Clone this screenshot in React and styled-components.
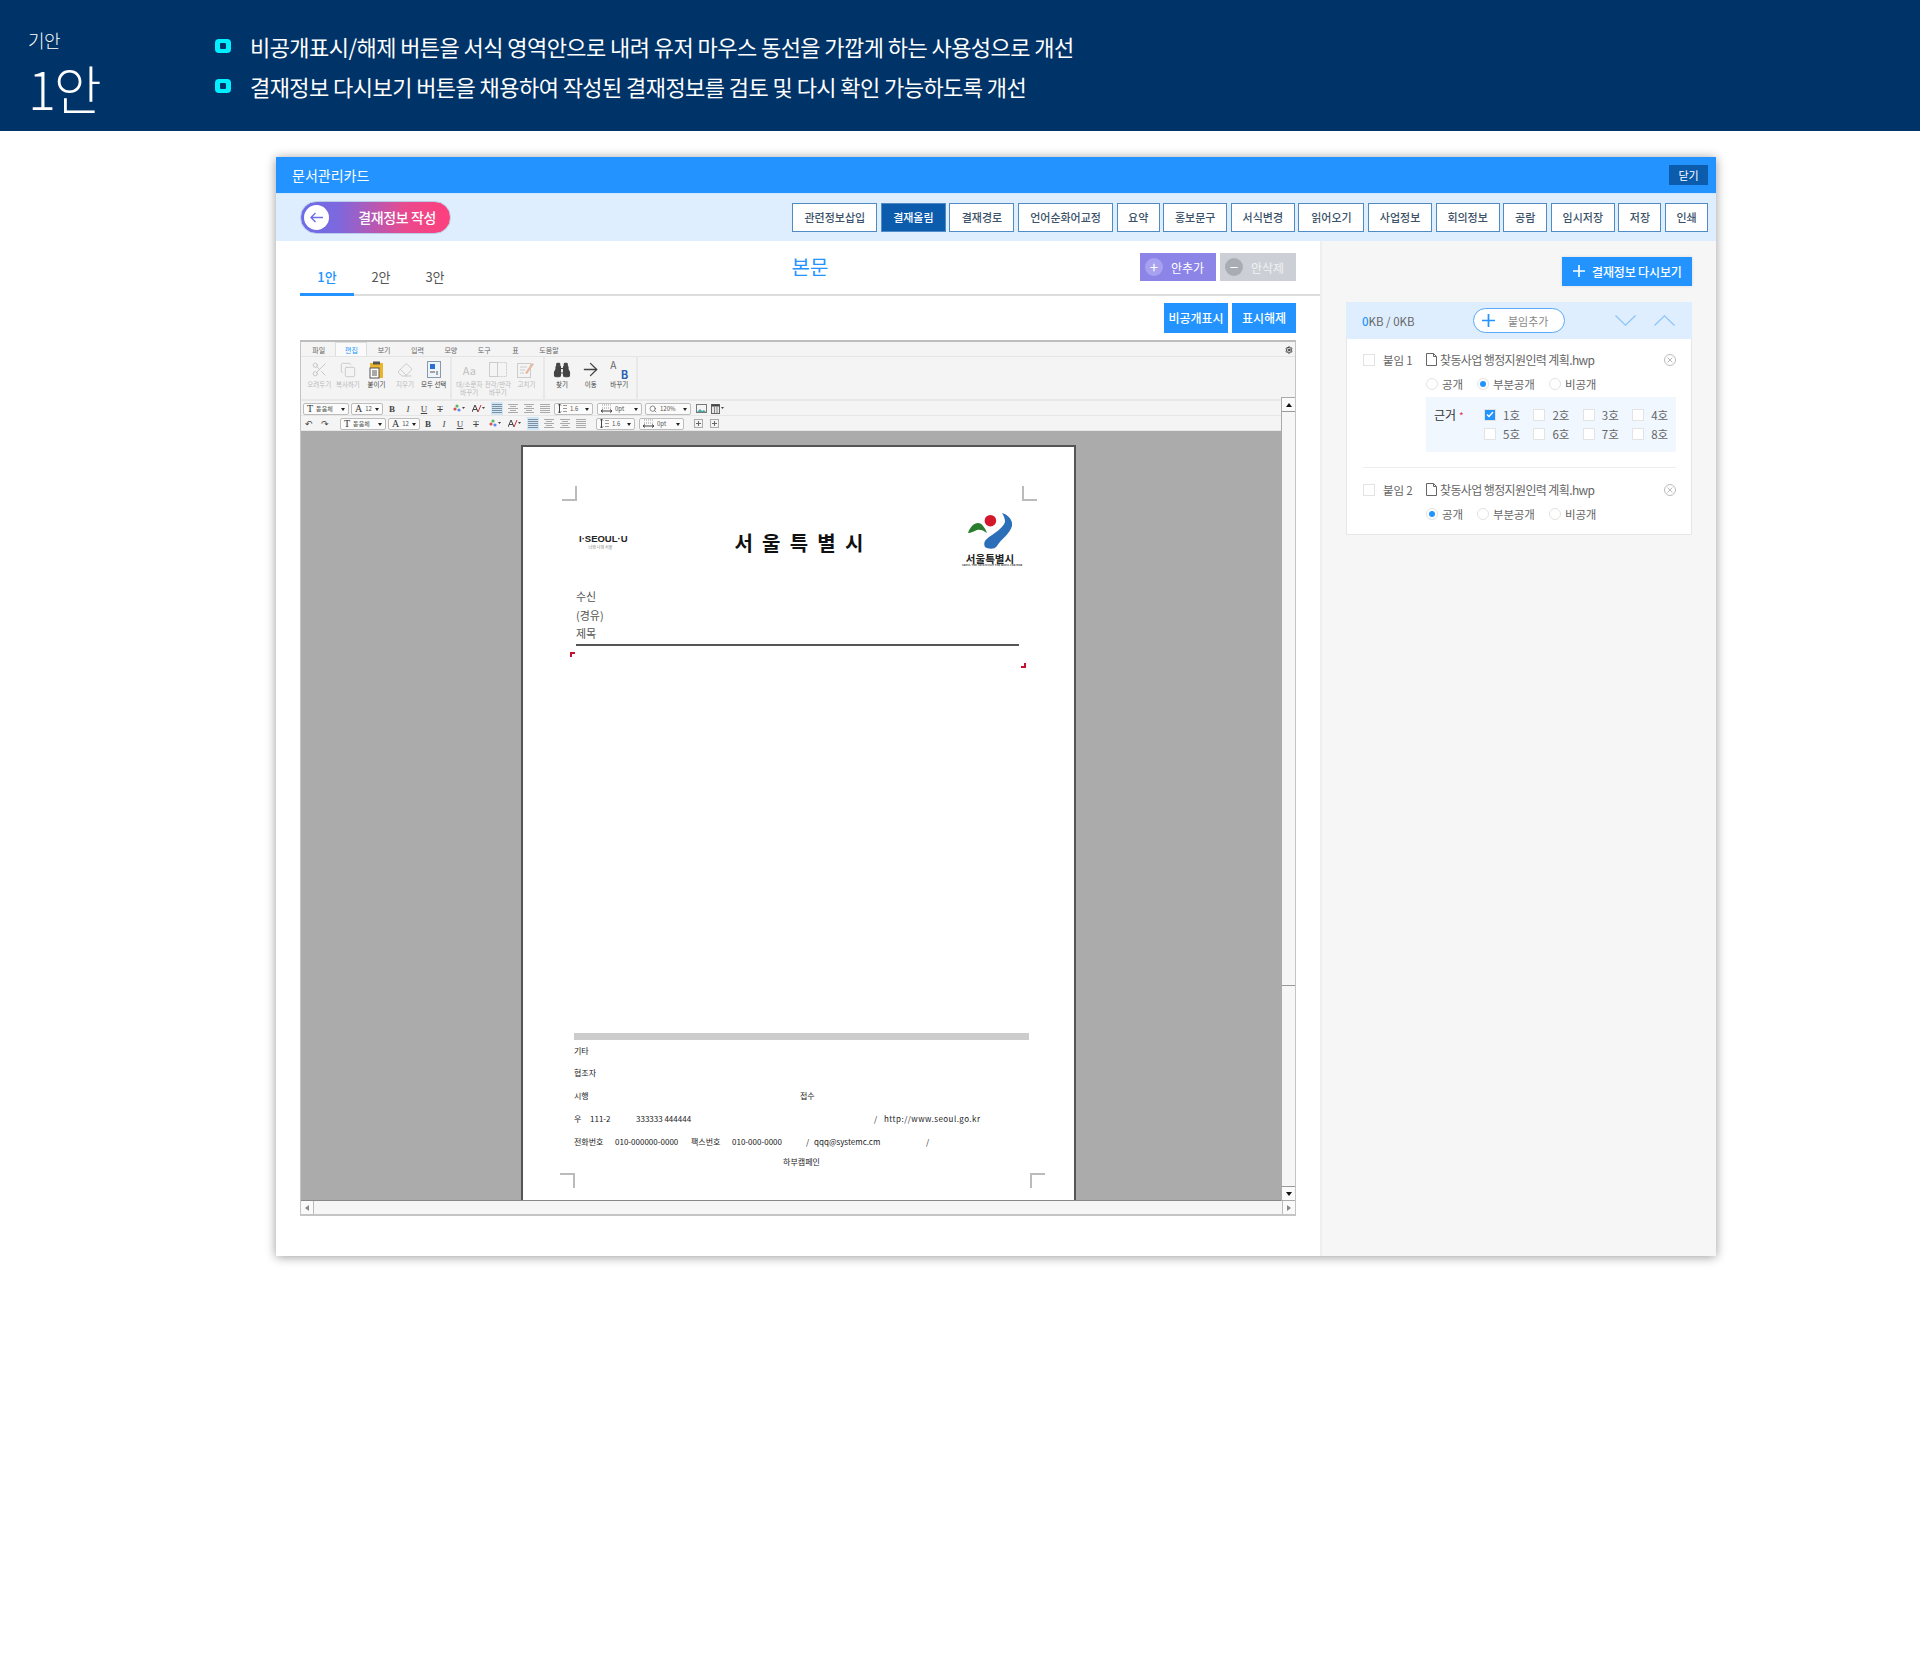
import React from "react";
import styled, { createGlobalStyle } from "styled-components";
import { ArrowRight, Binoculars, Copy, Eraser, Scissors, Search, Settings } from "lucide-react";

const GlobalStyle = createGlobalStyle`
  html, body {
    margin: 0;
    background: #fff;
    font-family: "Noto Sans CJK KR", "Noto Sans", sans-serif;
  }
  * { box-sizing: border-box; }
`;

const Page = styled.div`
  width: 1920px;
  height: 1671px;
  overflow: hidden;
`;

/* top banner */
const Banner = styled.header`
  height: 131px;
  background: #003468;
  color: #fff;
  display: flex;
  padding-left: 28px;
`;
const Version = styled.div`
  width: 187px;
  padding-top: 25px;
`;
const VersionLabel = styled.div`
  font-size: 18px;
  line-height: 30px;
  letter-spacing: -0.5px;
  font-weight: 300;
`;
const VersionName = styled.div`
  font-size: 52px;
  line-height: 60px;
  margin-top: 3px;
  letter-spacing: -2px;
  font-weight: 300;
`;
const Notes = styled.ul`
  list-style: none;
  margin: 0;
  padding: 26px 0 0;
`;
const Note = styled.li`
  display: flex;
  align-items: center;
  gap: 19px;
  height: 40px;
  font-size: 22px;
  letter-spacing: -0.56px;
`;
const Bullet = styled.span`
  width: 16px;
  height: 14px;
  border-radius: 4px;
  background: #00f0ff;
  display: flex;
  align-items: center;
  justify-content: center;
  &::after {
    content: "";
    width: 6px;
    height: 6px;
    background: #003468;
    border-radius: 1px;
  }
`;

/* card */
const Card = styled.section`
  width: 1440px;
  height: 1099px;
  margin: 26px 0 0 276px;
  box-shadow: 0 1px 10px rgba(0, 0, 0, 0.4);
  background: #fff;
  display: flex;
  flex-direction: column;
`;
const CardTitleBar = styled.div`
  height: 36px;
  flex: none;
  background: #2394ff;
  display: flex;
  align-items: center;
  justify-content: space-between;
  padding: 0 8px 0 16px;
  color: #fff;
  font-size: 14px;
`;
const CloseButton = styled.button`
  width: 39px;
  height: 20px;
  border: 0;
  padding: 0;
  background: #0b5cad;
  color: #fff;
  font: inherit;
  font-size: 11px;
`;
const ToolBar = styled.div`
  height: 48px;
  flex: none;
  background: #deeeff;
  border-top: 1px solid #cfe6ff;
  display: flex;
  align-items: center;
  padding: 0 8px 0 24px;
`;
const ComposeButton = styled.button`
  width: 151px;
  height: 33px;
  border-radius: 17px;
  border: 1px solid #b9cdea;
  padding: 0 14px 2px 3px;
  background: linear-gradient(90deg, #6d6ce9 0%, #7d68dd 25%, #e94a8e 70%, #ff3f7c 100%);
  color: #fff;
  font: inherit;
  font-size: 14px;
  font-weight: 500;
  letter-spacing: -0.4px;
  display: flex;
  align-items: center;
  justify-content: space-between;
`;
const ArrowDisc = styled.span`
  width: 25px;
  height: 25px;
  margin-top: 2px;
  border-radius: 50%;
  background: #fff;
  color: #6d6ce9;
  display: flex;
  align-items: center;
  justify-content: center;
`;
const ToolButtons = styled.div`
  margin-left: auto;
  display: flex;
  gap: 3.6px;
`;
const ToolButton = styled.button`
  width: ${(p) => p.$w}px;
  height: 29px;
  padding: 0 0 2px;
  border: 1px solid #4f8cc6;
  background: ${(p) => (p.$active ? "#0b5cad" : "#fff")};
  color: ${(p) => (p.$active ? "#fff" : "#3c5269")};
  font: inherit;
  font-size: 11px;
  font-weight: 500;
`;
const CardBody = styled.div`
  flex: 1;
  display: grid;
  grid-template-columns: 1044px 396px;
  min-height: 0;
`;

/* left pane */
const MainPane = styled.div`
  padding-left: 24px;
`;
const TabBar = styled.div`
  height: 55px;
  display: grid;
  grid-template-columns: 1fr auto 1fr;
  border-bottom: 2px solid #ddd;
  padding: 0 24px 0 0;
`;
const Tabs = styled.div`
  display: flex;
  align-items: flex-end;
`;
const Tab = styled.div`
  width: 54px;
  height: 38px;
  margin-bottom: -2px;
  padding-top: 3px;
  font-size: 13px;
  line-height: 31px;
  text-align: center;
  font-weight: ${(p) => (p.$active ? 500 : 400)};
  color: ${(p) => (p.$active ? "#2394ff" : "#555")};
  border-bottom: 3px solid ${(p) => (p.$active ? "#2394ff" : "transparent")};
`;
const DocTitle = styled.h2`
  margin: 9px -24px 0 0;
  font-size: 20px;
  line-height: 34px;
  font-weight: 400;
  color: #2394ff;
`;
const VersionActions = styled.div`
  display: flex;
  justify-content: flex-end;
  gap: 4px;
  padding-top: 12px;
`;
const VersionButton = styled.button`
  width: 76px;
  height: 28px;
  padding: 0 0 0 5px;
  border: 0;
  background: ${(p) => (p.$muted ? "#ccd0d6" : "#8d84e8")};
  color: ${(p) => (p.$muted ? "#f0f1f3" : "#fff")};
  font: inherit;
  font-size: 12px;
  display: flex;
  align-items: center;
  gap: 8px;
`;
const VersionDisc = styled.span`
  width: 18px;
  height: 18px;
  border-radius: 50%;
  background: ${(p) => (p.$muted ? "#a9adb3" : "#a8a1f0")};
  color: #fff;
  font-size: 15px;
  line-height: 17px;
  text-align: center;
`;
const MaskActions = styled.div`
  display: flex;
  justify-content: flex-end;
  gap: 4px;
  padding: 7px 24px 7px 0;
`;
const MaskButton = styled.button`
  width: ${(p) => p.$w}px;
  height: 30px;
  padding: 0 0 2px;
  border: 0;
  background: #2394ff;
  color: #fff;
  font: inherit;
  font-size: 12px;
  font-weight: 500;
`;

/* word processor */
const Editor = styled.div`
  position: relative;
  width: 996px;
  height: 876px;
  border: 1px solid #c4c4c4;
  border-top: 2px solid #bdbdbd;
  border-bottom-width: 2px;
  background: #f4f4f4;
  display: flex;
  flex-direction: column;
  color: #555;
`;
const MenuTabs = styled.div`
  height: 15px;
  flex: none;
  display: flex;
  align-items: flex-end;
  padding: 0 2px 0 1px;
  border-bottom: 1px solid #e4e4e4;
`;
const MenuTab = styled.div`
  width: ${(p) => p.$w || 33.4}px;
  height: 14px;
  font-size: 7px;
  line-height: 15px;
  text-align: center;
  color: ${(p) => (p.$active ? "#2394ff" : "#666")};
  background: ${(p) => (p.$active ? "#fafafa" : "transparent")};
  border: 1px solid ${(p) => (p.$active ? "#ddd" : "transparent")};
  border-bottom: 0;
`;
const MenuGear = styled.span`
  margin: 0 0 2px auto;
  display: flex;
  color: #333;
`;
const Ribbon = styled.div`
  height: 44px;
  flex: none;
  display: flex;
  padding-left: 4px;
  border-bottom: 2px solid #e8e8e8;
`;
const RibbonGroup = styled.div`
  display: flex;
  padding-right: 2px;
  margin-right: 3px;
  border-right: 2px solid #e8e8e8;
`;
const RibbonItem = styled.div`
  width: 28.6px;
  display: flex;
  flex-direction: column;
  align-items: center;
  padding-top: 2px;
  font-size: 6.5px;
  line-height: 8px;
  white-space: nowrap;
  text-align: center;
  color: ${(p) => (p.$off ? "#b9b9b9" : "#444")};
`;
const RibbonGlyph = styled.div`
  height: 21px;
  display: flex;
  align-items: center;
  justify-content: center;
  color: ${(p) => (p.$off ? "#c0c0c0" : "#444")};
  font-size: 11px;
`;
const ReplaceGlyph = styled.span`
  display: flex;
  width: 18px;
  height: 19px;
  justify-content: space-between;
  font-size: 10px;
  line-height: 10px;
  color: #666;
  b {
    align-self: flex-end;
    color: #2b63b5;
    font-size: 11px;
  }
`;
const FormatRow = styled.div`
  height: 15px;
  flex: none;
  display: flex;
  align-items: center;
  padding-top: 1px;
  padding-left: ${(p) => p.$pad}px;
  border-bottom: 1px solid #e6e6e6;
`;
const FormatSelect = styled.div`
  width: ${(p) => p.$w}px;
  height: 12px;
  margin-left: ${(p) => p.$ml || 0}px;
  flex: none;
  border: 1px solid #bdbdbd;
  border-radius: 2px;
  background: #fbfbfb;
  font-size: 6px;
  line-height: 10px;
  padding-left: 3px;
  color: #555;
  position: relative;
  white-space: nowrap;
  display: flex;
  align-items: center;
  gap: 3px;
  &::after {
    content: "";
    position: absolute;
    right: 3px;
    top: 4px;
    border: 2px solid transparent;
    border-top: 3px solid #222;
  }
`;
const SelectGlyph = styled.span`
  font-family: "Liberation Serif", serif;
  font-size: 10px;
  line-height: 10px;
  color: #333;
`;
const FormatKey = styled.span`
  width: 16px;
  margin-left: ${(p) => p.$ml || 0}px;
  flex: none;
  text-align: center;
  font-family: "Liberation Serif", serif;
  font-size: 9px;
  line-height: 12px;
  font-weight: ${(p) => (p.$bold ? 700 : 400)};
  font-style: ${(p) => (p.$italic ? "italic" : "normal")};
  text-decoration: ${(p) => (p.$under ? "underline" : p.$strike ? "line-through" : "none")};
  color: #444;
`;
const FormatIcon = styled.span`
  width: 16px;
  height: 13px;
  margin-left: ${(p) => p.$ml || 0}px;
  flex: none;
  display: flex;
  align-items: center;
  justify-content: center;
  background: ${(p) => (p.$active ? "linear-gradient(90deg, transparent 2px, #cfe6f7 2px, #cfe6f7 14px, transparent 14px)" : "none")};
`;
const Workspace = styled.div`
  flex: 1;
  min-height: 0;
  margin-right: 14px;
  background: #ababab;
  border-bottom: 1px solid #888;
  overflow: hidden;
  padding: 14px 0 0 220px;
`;
const Paper = styled.div`
  position: relative;
  width: 555px;
  height: 755px;
  background: #fff;
  border: 2px solid #555;
  border-bottom: 0;
  padding: 66px 56px 0 53px;
  color: #333;
`;
const CropMark = styled.i`
  position: absolute;
  width: 15px;
  height: 15px;
  border: 0 solid #bbb;
  ${(p) => p.$top && "top: 39px; border-bottom-width: 2px;"}
  ${(p) => !p.$top && "bottom: 12px; border-top-width: 2px;"}
  ${(p) => p.$left && `left: ${p.$top ? 39 : 37}px; border-right-width: 2px;`}
  ${(p) => !p.$left && `right: ${p.$top ? 37 : 29}px; border-left-width: 2px;`}
`;
const BodyMark = styled.i`
  position: absolute;
  width: 5px;
  height: 5px;
  border: 0 solid #c41230;
  ${(p) => (p.$start
    ? "left: 47px; top: 205px; border-top-width: 2px; border-left-width: 2px;"
    : "right: 48px; top: 216px; border-bottom-width: 2px; border-right-width: 2px;")}
`;
const Letterhead = styled.div`
  height: 57px;
  display: grid;
  grid-template-columns: 60px 1fr 56px;
  align-items: start;
`;
const Slogan = styled.div`
  padding: 20px 0 0 3px;
  text-align: center;
  font-family: "Liberation Sans", sans-serif;
  font-weight: 700;
  font-size: 9.5px;
  line-height: 12px;
  color: #222;
  white-space: nowrap;
  width: 46px;
  small {
    display: block;
    font-family: "Noto Sans CJK KR", sans-serif;
    font-size: 4px;
    line-height: 5px;
    font-weight: 400;
    color: #777;
  }
`;
const CityName = styled.div`
  padding: 15px 0 0 9px;
  text-align: center;
  font-size: 20px;
  line-height: 30px;
  font-weight: 700;
  letter-spacing: 9.2px;
  color: #111;
`;
const CityMark = styled.div`
  text-align: center;
  font-size: 10.5px;
  line-height: 11px;
  font-weight: 700;
  color: #222;
  white-space: nowrap;
  svg { display: block; margin: 0 auto 4px; }
  small {
    display: block;
    font-size: 2.5px;
    line-height: 3px;
    letter-spacing: 0.1px;
  }
`;
const Receiver = styled.div`
  margin-top: 17px;
  font-size: 11px;
  line-height: 18.5px;
  color: #555;
  width: 443px;
  border-bottom: 2px solid #555;
  padding-bottom: 1px;
`;
const FootBlock = styled.div`
  margin: 387px -11px 0 -2px;
  border-top: 7px solid #ccc;
  padding-top: 1px;
  font-size: 8px;
  color: #222;
`;
const FootRow = styled.div`
  height: ${(p) => p.$h || 23}px;
  display: flex;
  align-items: center;
  white-space: nowrap;
  justify-content: ${(p) => (p.$center ? "center" : "flex-start")};
`;
const FootCell = styled.span`
  flex: none;
  width: ${(p) => p.$w}px;
`;
const FootLink = styled.span`
  letter-spacing: 0.45px;
`;

const VerticalScroll = styled.div`
  position: absolute;
  right: 0;
  top: 55px;
  bottom: 13px;
  width: 14px;
  background: #f6f6f6;
  border: 1px solid #aaa;
  border-right: 0;
  display: flex;
  flex-direction: column;
  justify-content: space-between;
`;
const ScrollStep = styled.div`
  height: 14px;
  background: #fafafa;
  border-bottom: 1px solid #999;
  display: flex;
  align-items: center;
  justify-content: center;
  &::after {
    content: "";
    border: 3px solid transparent;
    border-bottom: 4px solid #111;
    border-top: 0;
  }
`;
const ScrollStepDown = styled(ScrollStep)`
  border-bottom: 0;
  border-top: 1px solid #999;
  &::after {
    border-bottom: 0;
    border-top: 4px solid #111;
  }
`;
const ScrollThumbEnd = styled.div`
  position: absolute;
  left: 0;
  right: 0;
  top: 587px;
  border-top: 1px solid #999;
`;
const HorizontalScroll = styled.div`
  height: 13px;
  flex: none;
  display: flex;
  justify-content: space-between;
  background: #f6f6f6;
`;
const HorizontalStep = styled.div`
  width: 13px;
  background: #fafafa;
  border: 1px solid #bbb;
  border-width: 0 ${(p) => (p.$right ? 0 : 1)}px 0 ${(p) => (p.$right ? 1 : 0)}px;
  display: flex;
  align-items: center;
  justify-content: center;
  &::after {
    content: "";
    border: 3px solid transparent;
    ${(p) => (p.$right ? "border-left: 4px solid #888; border-right: 0;" : "border-right: 4px solid #888; border-left: 0;")}
  }
`;

/* right pane */
const SidePane = styled.aside`
  background: #f6f6f6;
  border-left: 2px solid #eee;
  padding: 16px 24px 0 24px;
`;
const ReviewButton = styled.button`
  display: flex;
  align-items: center;
  gap: 7px;
  margin-left: auto;
  width: 130px;
  height: 29px;
  padding: 0 0 1px 11px;
  border: 0;
  background: #2394ff;
  color: #fff;
  font: inherit;
  font-size: 12px;
  font-weight: 500;
  letter-spacing: -0.15px;
  box-shadow: 0 0 3px rgba(0, 0, 0, 0.12);
`;
const AttachPanel = styled.div`
  margin-top: 16px;
  width: 346px;
  height: 233px;
  background: #fff;
  border: 1px solid #e6e6e6;
  border-top: 0;
`;
const AttachHead = styled.div`
  height: 37px;
  margin: 0 -1px;
  background: #deeeff;
  display: flex;
  align-items: center;
  padding: 0 17px 0 16px;
  font-size: 11.5px;
  color: #666;
  b { color: #2394ff; font-weight: 500; }
`;
const AttachSize = styled.div`
  width: 111px;
`;
const AddPill = styled.div`
  width: 92px;
  height: 25px;
  border: 1px solid #5aaaf5;
  border-radius: 13px;
  background: #fff;
  display: flex;
  align-items: center;
  gap: 13px;
  padding-left: 8px;
  font-size: 11px;
  color: #888;
`;
const Chevrons = styled.div`
  margin-left: auto;
  display: flex;
  gap: 18px;
`;
const AttachItem = styled.div`
  margin: 0 15px 0 16px;
  padding-top: ${(p) => p.$pt}px;
  padding-bottom: ${(p) => p.$pb}px;
  border-bottom: ${(p) => (p.$last ? "0" : "1px solid #eee")};
  display: grid;
  grid-template-columns: 63px minmax(0, 1fr);
  font-size: 12px;
  color: #666;
`;
const AttachLabel = styled.label`
  display: flex;
  align-items: center;
  gap: 8px;
  height: 20px;
  font-size: 11.5px;
  letter-spacing: -0.2px;
`;
const BoxMark = styled.span`
  width: 12px;
  height: 12px;
  flex: none;
  border: 1px solid #e3e3e3;
  background: ${(p) => (p.$on ? "#2394ff" : "#fff")};
  display: flex;
  align-items: center;
  justify-content: center;
`;
const FileLine = styled.div`
  height: 20px;
  display: flex;
  align-items: center;
  gap: 3px;
  padding-bottom: 1px;
  font-size: 12px;
  letter-spacing: -0.62px;
  white-space: nowrap;
`;
const RemoveIcon = styled.span`
  margin-left: auto;
  display: flex;
`;
const RadioRow = styled.div`
  height: 24px;
  margin-top: 2px;
  display: flex;
  align-items: center;
  font-size: 11.5px;
  letter-spacing: -0.2px;
`;
const RadioItem = styled.label`
  width: ${(p) => p.$w}px;
  display: flex;
  align-items: center;
  gap: 4px;
`;
const RadioDot = styled.span`
  width: 12px;
  height: 12px;
  border-radius: 50%;
  border: 1px solid #e3e3e3;
  background: #fff;
  display: flex;
  align-items: center;
  justify-content: center;
  &::after {
    content: "";
    width: 6px;
    height: 6px;
    border-radius: 50%;
    background: ${(p) => (p.$on ? "#2394ff" : "transparent")};
  }
`;
const BasisBox = styled.div`
  height: 55px;
  margin-top: 1px;
  background: #f0f7ff;
  display: grid;
  grid-template-columns: 50px minmax(0, 1fr);
  padding: 8px 0 0 8px;
`;
const BasisLabel = styled.div`
  font-size: 12px;
  line-height: 20px;
  color: #333;
  i { color: #e8344e; font-style: normal; margin-left: 3px; font-size: 10px; }
`;
const BasisGrid = styled.div`
  display: grid;
  grid-template-columns: repeat(3, 49.4px) 1fr;
  grid-auto-rows: 19px;
`;
const BasisItem = styled.label`
  display: flex;
  align-items: center;
  gap: 7px;
  font-size: 11.5px;
  white-space: nowrap;
`;

const ribbonGroups = [
  [
    { label: "오려두기", off: true, icon: <Scissors size={17} strokeWidth={1.2} /> },
    { label: "복사하기", off: true, icon: <Copy size={16} strokeWidth={1.2} /> },
    {
      label: "붙이기",
      icon: (
        <svg width="15" height="18" viewBox="0 0 15 18">
          <rect x="1" y="2" width="13" height="15" fill="#e9b52c" />
          <rect x="4" y="0.5" width="7" height="3" fill="#555" />
          <rect x="1" y="7" width="9" height="10" fill="#fff" stroke="#555" />
          <path d="M3 10h5M3 12h5M3 14h5" stroke="#555" />
        </svg>
      ),
    },
    { label: "지우기", off: true, icon: <Eraser size={16} strokeWidth={1.2} /> },
    {
      label: "모두 선택",
      icon: (
        <svg width="14" height="17" viewBox="0 0 14 17">
          <rect x="0.5" y="0.5" width="13" height="16" fill="#eef4fb" stroke="#89a" />
          <rect x="3" y="3" width="5" height="5" fill="#2a6fd6" />
          <path d="M10 10v4M3 11h5" stroke="#555" />
        </svg>
      ),
    },
  ],
  [
    { label: "대/소문자", sub: "바꾸기", off: true, icon: "Aa" },
    {
      label: "전각/반각",
      sub: "바꾸기",
      off: true,
      icon: (
        <svg width="18" height="15" viewBox="0 0 18 15">
          <rect x="0.5" y="0.5" width="8" height="14" fill="none" stroke="#ccc" />
          <rect x="8.5" y="0.5" width="9" height="14" fill="none" stroke="#ccc" strokeDasharray="2 1" />
        </svg>
      ),
    },
    {
      label: "고치기",
      off: true,
      icon: (
        <svg width="18" height="17" viewBox="0 0 18 17">
          <rect x="0.5" y="2.5" width="13" height="14" fill="none" stroke="#ccc" />
          <path d="M3 6h7M3 9h5M3 12h4" stroke="#ccc" />
          <path d="M8 12l7-10 2 1-7 10z" fill="#e7b9a0" />
        </svg>
      ),
    },
  ],
  [
    { label: "찾기", icon: <Binoculars size={18} strokeWidth={1.5} fill="#444" /> },
    { label: "이동", icon: <ArrowRight size={21} strokeWidth={1.5} /> },
    {
      label: "바꾸기",
      icon: (
        <ReplaceGlyph>
          A<b>B</b>
        </ReplaceGlyph>
      ),
    },
  ],
];

const toolButtons = [
  ["관련정보삽입", 85],
  ["결재올림", 65, true],
  ["결재경로", 65],
  ["언어순화어교정", 95],
  ["요약", 43],
  ["홍보문구", 64],
  ["서식변경", 64],
  ["읽어오기", 66],
  ["사업정보", 64],
  ["회의정보", 64],
  ["공람", 44],
  ["임시저장", 64],
  ["저장", 43],
  ["인쇄", 43],
];

const AlignIcon = ({ short, active }) => (
  <svg width="10" height="9" viewBox="0 0 10 9">
    <path
      d={short ? "M0 .5h10M2 2.5h6M0 4.5h10M2 6.5h6M0 8.5h10" : "M0 .5h10M0 2.5h10M0 4.5h10M0 6.5h10M0 8.5h10"}
      stroke={active ? "#7f8f9f" : "#aaa"}
    />
  </svg>
);
const ColorIcon = () => (
  <svg width="13" height="9" viewBox="0 0 13 9">
    <circle cx="3" cy="5" r="1.6" fill="#d9534f" />
    <circle cx="5" cy="2" r="1.6" fill="#5cb85c" />
    <circle cx="7" cy="6" r="1.6" fill="#5b8def" />
    <path d="M10 3h3l-1.5 2z" fill="#444" />
  </svg>
);
const PenIcon = () => (
  <svg width="13" height="9" viewBox="0 0 13 9">
    <path d="M0 8L3 1l3 7M1 5.5h4" stroke="#444" fill="none" />
    <path d="M6 8l3-7" stroke="#c33" />
    <path d="M10 3h3l-1.5 2z" fill="#444" />
  </svg>
);
const PictureIcon = () => (
  <svg width="11" height="9" viewBox="0 0 11 9">
    <rect x="0.5" y="0.5" width="10" height="8" fill="#f4f4f4" stroke="#777" />
    <path d="M1 8l3-3 2 2 2-1 2 2z" fill="#4aa8a0" />
  </svg>
);
const TableIcon = () => (
  <svg width="13" height="10" viewBox="0 0 13 10">
    <rect x="0.5" y="0.5" width="8" height="9" fill="#e8e8e8" stroke="#666" />
    <rect x="0.5" y="0.5" width="8" height="2" fill="#444" />
    <path d="M3.5 3v6M6 3v6" stroke="#888" />
    <path d="M10 3h3l-1.5 2z" fill="#444" />
  </svg>
);
const LineHeightIcon = () => (
  <svg width="9" height="9" viewBox="0 0 9 9">
    <path d="M1.5 0v9M0 1.5L1.5 0L3 1.5M0 7.5L1.5 9L3 7.5" fill="none" stroke="#444" />
    <path d="M5 1.5h4M5 4.5h4M5 7.5h4" stroke="#999" />
  </svg>
);
const GapIcon = () => (
  <svg width="11" height="9" viewBox="0 0 11 9">
    <path d="M1 1h9M1 4h9" stroke="#999" strokeDasharray="1 1" />
    <path d="M0 7h11M2 5.5L0 7l2 1.5M9 5.5L11 7L9 8.5" fill="none" stroke="#444" />
  </svg>
);
const SmallBoxIcon = () => (
  <svg width="9" height="9" viewBox="0 0 9 9">
    <rect x="0.5" y="0.5" width="8" height="8" fill="none" stroke="#aaa" />
    <path d="M2 4.5h5M4.5 2v5" stroke="#666" />
  </svg>
);

const TextKeys = ({ ml }) => (
  <>
    <FormatKey $bold $ml={ml}>B</FormatKey>
    <FormatKey $italic>I</FormatKey>
    <FormatKey $under>U</FormatKey>
    <FormatKey $strike>T</FormatKey>
  </>
);
const Aligns = ({ ml }) => (
  <>
    <FormatIcon $active $ml={ml}>
      <AlignIcon active />
    </FormatIcon>
    <FormatIcon>
      <AlignIcon short />
    </FormatIcon>
    <FormatIcon>
      <AlignIcon short />
    </FormatIcon>
    <FormatIcon>
      <AlignIcon />
    </FormatIcon>
  </>
);

const PlusIcon = ({ size = 12, color = "#fff" }) => (
  <svg width={size} height={size} viewBox="0 0 12 12">
    <path d="M6 0v12M0 6h12" stroke={color} strokeWidth="1.6" />
  </svg>
);
const Chevron = ({ up }) => (
  <svg width="21" height="11" viewBox="0 0 21 11">
    <path d={up ? "M0.5 10.5L10.5 0.8L20.5 10.5" : "M0.5 0.5L10.5 10.2L20.5 0.5"} fill="none" stroke="#8cc4f8" strokeWidth="1.2" />
  </svg>
);
const FileIcon = () => (
  <svg width="11" height="13" viewBox="0 0 11 13">
    <path d="M0.5 0.5h7l3 3v9h-10zM7.5 0.5v3h3" fill="#fff" stroke="#666" />
  </svg>
);
const RemoveGlyph = () => (
  <svg width="12" height="12" viewBox="0 0 12 12">
    <circle cx="6" cy="6" r="5.5" fill="none" stroke="#bbb" />
    <path d="M3.5 3.5l5 5M8.5 3.5l-5 5" stroke="#bbb" />
  </svg>
);

const Radios = ({ on }) => (
  <RadioRow>
    {[
      ["공개", 51],
      ["부분공개", 72],
      ["비공개", 60],
    ].map(([label, w], i) => (
      <RadioItem key={label} $w={w}>
        <RadioDot $on={i === on} />
        {label}
      </RadioItem>
    ))}
  </RadioRow>
);

export default function App() {
  return (
    <Page>
      <GlobalStyle />
      <Banner>
        <Version>
          <VersionLabel>기안</VersionLabel>
          <VersionName>1안</VersionName>
        </Version>
        <Notes>
          <Note>
            <Bullet />
            비공개표시/해제 버튼을 서식 영역안으로 내려 유저 마우스 동선을 가깝게 하는 사용성으로 개선
          </Note>
          <Note>
            <Bullet />
            결재정보 다시보기 버튼을 채용하여 작성된 결재정보를 검토 및 다시 확인 가능하도록 개선
          </Note>
        </Notes>
      </Banner>

      <Card>
        <CardTitleBar>
          문서관리카드
          <CloseButton>닫기</CloseButton>
        </CardTitleBar>
        <ToolBar>
          <ComposeButton>
            <ArrowDisc>
              <svg width="13" height="11" viewBox="0 0 13 11">
                <path d="M13 5.5H1M5.5 1L1 5.5L5.5 10" fill="none" stroke="currentColor" strokeWidth="1.4" />
              </svg>
            </ArrowDisc>
            결재정보 작성
          </ComposeButton>
          <ToolButtons>
            {toolButtons.map(([label, w, active]) => (
              <ToolButton key={label} $w={w} $active={active}>
                {label}
              </ToolButton>
            ))}
          </ToolButtons>
        </ToolBar>

        <CardBody>
          <MainPane>
            <TabBar>
              <Tabs>
                <Tab $active>1안</Tab>
                <Tab>2안</Tab>
                <Tab>3안</Tab>
              </Tabs>
              <DocTitle>본문</DocTitle>
              <VersionActions>
                <VersionButton>
                  <VersionDisc>+</VersionDisc>안추가
                </VersionButton>
                <VersionButton $muted>
                  <VersionDisc $muted>−</VersionDisc>안삭제
                </VersionButton>
              </VersionActions>
            </TabBar>
            <MaskActions>
              <MaskButton $w={64}>비공개표시</MaskButton>
              <MaskButton $w={64}>표시해제</MaskButton>
            </MaskActions>

            <Editor>
              <MenuTabs>
                <MenuTab>파일</MenuTab>
                <MenuTab $active $w={32}>편집</MenuTab>
                <MenuTab>보기</MenuTab>
                <MenuTab>입력</MenuTab>
                <MenuTab>모양</MenuTab>
                <MenuTab>도구</MenuTab>
                <MenuTab $w={29}>표</MenuTab>
                <MenuTab $w={38}>도움말</MenuTab>
                <MenuGear>
                  <Settings size={8} strokeWidth={3} />
                </MenuGear>
              </MenuTabs>
              <Ribbon>
                {ribbonGroups.map((group, i) => (
                  <RibbonGroup key={i}>
                    {group.map((item) => (
                      <RibbonItem key={item.label} $off={item.off}>
                        <RibbonGlyph $off={item.off}>{item.icon}</RibbonGlyph>
                        {item.label}
                        {item.sub && <div>{item.sub}</div>}
                      </RibbonItem>
                    ))}
                  </RibbonGroup>
                ))}
              </Ribbon>
              <FormatRow $pad={2}>
                <FormatSelect $w={46}><SelectGlyph>T</SelectGlyph>돋움체</FormatSelect>
                <FormatSelect $w={32} $ml={2}><SelectGlyph>A</SelectGlyph>12</FormatSelect>
                <TextKeys ml={1} />
                <FormatIcon $ml={2}><ColorIcon /></FormatIcon>
                <FormatIcon $ml={4}><PenIcon /></FormatIcon>
                <Aligns ml={3} />
                <FormatSelect $w={39} $ml={1}><LineHeightIcon />1.6</FormatSelect>
                <FormatSelect $w={45} $ml={4}><GapIcon />0pt</FormatSelect>
                <FormatSelect $w={46} $ml={3}><Search size={8} strokeWidth={2} />120%</FormatSelect>
                <FormatIcon $ml={2}><PictureIcon /></FormatIcon>
                <FormatIcon><TableIcon /></FormatIcon>
              </FormatRow>
              <FormatRow $pad={0}>
                <FormatKey>↶</FormatKey>
                <FormatKey>↷</FormatKey>
                <FormatSelect $w={46} $ml={7}><SelectGlyph>T</SelectGlyph>돋움체</FormatSelect>
                <FormatSelect $w={32} $ml={2}><SelectGlyph>A</SelectGlyph>12</FormatSelect>
                <TextKeys />
                <FormatIcon $ml={2}><ColorIcon /></FormatIcon>
                <FormatIcon $ml={4}><PenIcon /></FormatIcon>
                <Aligns ml={3} />
                <FormatSelect $w={39} $ml={7}><LineHeightIcon />1.6</FormatSelect>
                <FormatSelect $w={45} $ml={4}><GapIcon />0pt</FormatSelect>
                <FormatIcon $ml={6}><SmallBoxIcon /></FormatIcon>
                <FormatIcon><SmallBoxIcon /></FormatIcon>
              </FormatRow>
              <Workspace>
                <Paper>
                  <CropMark $top $left />
                  <CropMark $top />
                  <CropMark $left />
                  <CropMark />
                  <BodyMark $start />
                  <BodyMark />
                  <Letterhead>
                    <Slogan>
                      I·SEOUL·U
                      <small>너와 나의 서울</small>
                    </Slogan>
                    <CityName>서울특별시</CityName>
                    <CityMark>
                      <svg width="44" height="36" viewBox="0 0 44 36">
                        <circle cx="22.4" cy="7.7" r="5.8" fill="#d2182a" />
                        <path d="M0 20C2 14 6 10 10 10C14 10 17 15 19 20C15 17 12 16 9 17C6 18 3 20 0 20Z" fill="#2a7d2c" />
                        <path d="M34 0C41 2 45 8 44 13C42 21 33 26 29 33C26 37 20 36 17 34C15 30 17 27 21 24C27 20 35 15 37 9C37 6 36 3 34 0Z" fill="#2a6fb8" />
                      </svg>
                      서울특별시
                      <small>SEOUL THE TRUSTFULLY THE SEOUL FOR MAN</small>
                    </CityMark>
                  </Letterhead>
                  <Receiver>
                    <div>수신</div>
                    <div>(경유)</div>
                    <div>제목</div>
                  </Receiver>
                  <FootBlock>
                    <FootRow $h={20}>기타</FootRow>
                    <FootRow>협조자</FootRow>
                    <FootRow>
                      <FootCell $w={226}>시행</FootCell>
                      접수
                    </FootRow>
                    <FootRow>
                      <FootCell $w={16}>우</FootCell>
                      <FootCell $w={46}>111-2</FootCell>
                      <FootCell $w={238}>333333 444444</FootCell>
                      <FootCell $w={10}>/</FootCell>
                      <FootLink>http://www.seoul.go.kr</FootLink>
                    </FootRow>
                    <FootRow>
                      <FootCell $w={41}>전화번호</FootCell>
                      <FootCell $w={76}>010-000000-0000</FootCell>
                      <FootCell $w={41}>팩스번호</FootCell>
                      <FootCell $w={74}>010-000-0000</FootCell>
                      <FootCell $w={8}>/</FootCell>
                      <FootCell $w={112}>qqq@systemc.cm</FootCell>
                      /
                    </FootRow>
                    <FootRow $h={17} $center>하부캠페인</FootRow>
                  </FootBlock>
                </Paper>
              </Workspace>
              <HorizontalScroll>
                <HorizontalStep />
                <HorizontalStep $right />
              </HorizontalScroll>
              <VerticalScroll>
                <ScrollStep />
                <ScrollThumbEnd />
                <ScrollStepDown />
              </VerticalScroll>
            </Editor>
          </MainPane>

          <SidePane>
            <ReviewButton>
              <PlusIcon />
              결재정보 다시보기
            </ReviewButton>
            <AttachPanel>
              <AttachHead>
                <AttachSize>
                  <b>0</b>KB / 0KB
                </AttachSize>
                <AddPill>
                  <PlusIcon size={13} color="#2394ff" />
                  붙임추가
                </AddPill>
                <Chevrons>
                  <Chevron />
                  <Chevron up />
                </Chevrons>
              </AttachHead>
              <AttachItem $pt={11} $pb={15}>
                <AttachLabel>
                  <BoxMark />
                  붙임 1
                </AttachLabel>
                <div>
                  <FileLine>
                    <FileIcon />
                    찾동사업 행정지원인력 계획.hwp
                    <RemoveIcon>
                      <RemoveGlyph />
                    </RemoveIcon>
                  </FileLine>
                  <Radios on={1} />
                  <BasisBox>
                    <BasisLabel>
                      근거<i>*</i>
                    </BasisLabel>
                    <BasisGrid>
                      {[1, 2, 3, 4, 5, 6, 7, 8].map((n) => (
                        <BasisItem key={n}>
                          <BoxMark $on={n === 1}>
                            {n === 1 && (
                              <svg width="8" height="7" viewBox="0 0 8 7">
                                <path d="M1 3.5L3 5.5L7 1" fill="none" stroke="#fff" strokeWidth="1.4" />
                              </svg>
                            )}
                          </BoxMark>
                          {n}호
                        </BasisItem>
                      ))}
                    </BasisGrid>
                  </BasisBox>
                </div>
              </AttachItem>
              <AttachItem $pt={12} $pb={0} $last>
                <AttachLabel>
                  <BoxMark />
                  붙임 2
                </AttachLabel>
                <div>
                  <FileLine>
                    <FileIcon />
                    찾동사업 행정지원인력 계획.hwp
                    <RemoveIcon>
                      <RemoveGlyph />
                    </RemoveIcon>
                  </FileLine>
                  <Radios on={0} />
                </div>
              </AttachItem>
            </AttachPanel>
          </SidePane>
        </CardBody>
      </Card>
    </Page>
  );
}
